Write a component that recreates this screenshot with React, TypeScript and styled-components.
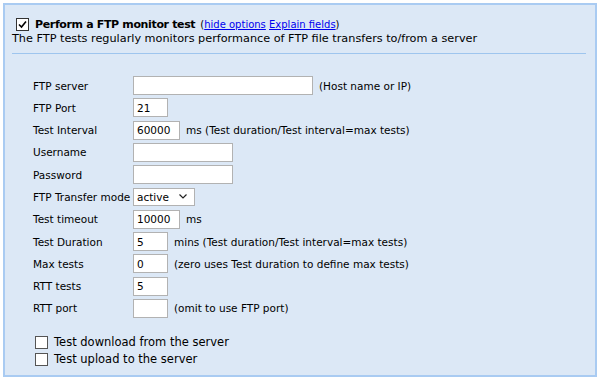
import React from "react";
import styled, { createGlobalStyle } from "styled-components";

const Global = createGlobalStyle`
  html, body {
    margin: 0;
    padding: 0;
    background: #ffffff;
  }
  body {
    font-family: "DejaVu Sans", Verdana, sans-serif;
    color: #000;
  }
`;

interface Row {
  label: string;
  value?: string;
  width: number;
  note?: string;
  select?: boolean;
}

const rows: Row[] = [
  { label: "FTP server", value: "", width: 180, note: "(Host name or IP)" },
  { label: "FTP Port", value: "21", width: 35 },
  { label: "Test Interval", value: "60000", width: 47, note: "ms (Test duration/Test interval=max tests)" },
  { label: "Username", value: "", width: 100 },
  { label: "Password", value: "", width: 100 },
  { label: "FTP Transfer mode", value: "active", width: 62, select: true },
  { label: "Test timeout", value: "10000", width: 47, note: "ms" },
  { label: "Test Duration", value: "5", width: 35, note: "mins (Test duration/Test interval=max tests)" },
  { label: "Max tests", value: "0", width: 35, note: "(zero uses Test duration to define max tests)" },
  { label: "RTT tests", value: "5", width: 35 },
  { label: "RTT port", value: "", width: 35, note: "(omit to use FTP port)" },
];

const CheckMark = () => (
  <svg width="9" height="9" viewBox="0 0 9 9">
    <path d="M1 4.5 L3.5 7 L8 1.5" fill="none" stroke="#000" strokeWidth="1.6" />
  </svg>
);

const Chevron = () => (
  <svg width="8" height="5" viewBox="0 0 8 5">
    <path d="M0.5 0.5 L4 4 L7.5 0.5" fill="none" stroke="#222" strokeWidth="1.2" />
  </svg>
);

export default function App() {
  return (
    <>
      <Global />
      <Panel>
        <Header>
          <TitleLine>
            <Box>
              <CheckMark />
            </Box>
            <Title>Perform a FTP monitor test</Title>
            <Links>
              (<a href="#">hide options</a> <a href="#">Explain fields</a>)
            </Links>
          </TitleLine>
          <Description>
            The FTP tests regularly monitors performance of FTP file transfers to/from a server
          </Description>
        </Header>
        <Divider />
        <Form>
          {rows.map((r) => (
            <React.Fragment key={r.label}>
              <Label>{r.label}</Label>
              <Field>
                {r.select ? (
                  <Select $width={r.width}>
                    <span>{r.value}</span>
                    <Chevron />
                  </Select>
                ) : (
                  <Input $width={r.width}>{r.value}</Input>
                )}
                {r.note && <Note>{r.note}</Note>}
              </Field>
            </React.Fragment>
          ))}
        </Form>
        <Options>
          <Option>
            <Box />
            Test download from the server
          </Option>
          <Option>
            <Box />
            Test upload to the server
          </Option>
        </Options>
      </Panel>
    </>
  );
}

const Panel = styled.div`
  margin: 3px;
  width: 594px;
  height: 374px;
  box-sizing: border-box;
  border: 2px solid #a9cbf2;
  background: #dce8f6;
  padding: 11px 9px 0 7px;
`;

const Header = styled.div``;

const TitleLine = styled.div`
  display: flex;
  align-items: center;
  height: 16px;
`;

const Box = styled.span`
  display: inline-flex;
  align-items: center;
  justify-content: center;
  width: 11px;
  height: 11px;
  border: 1px solid #333;
  background: #fff;
  box-sizing: content-box;
  margin: 0 6px 0 4px;
  flex: none;
`;

const Title = styled.span`
  font-weight: bold;
  font-size: 11px;
  letter-spacing: -0.35px;
`;

const Links = styled.span`
  font-size: 10px;
  margin-left: 5px;
  a {
    color: #0000ee;
    text-decoration: underline;
  }
`;

const Description = styled.div`
  font-size: 11.25px;
  line-height: 14px;
`;

const Divider = styled.div`
  height: 1px;
  background: #9ec5ee;
  margin: 7px 0 0 0;
`;

const Form = styled.div`
  display: grid;
  grid-template-columns: 100px auto;
  row-gap: 3.3px;
  margin: 22px 0 0 21px;
  font-size: 10.5px;
`;

const Label = styled.div`
  display: flex;
  align-items: center;
  height: 19px;
`;

const Field = styled.div`
  display: flex;
  align-items: center;
  height: 19px;
`;

const Input = styled.div<{ $width: number }>`
  width: ${(p) => p.$width}px;
  height: 19px;
  box-sizing: border-box;
  border: 1px solid #b2b2b2;
  background: #fff;
  font-size: 10.5px;
  padding: 0 3px;
  display: flex;
  align-items: center;
`;

const Select = styled(Input)`
  justify-content: space-between;
  padding: 0 7px 0 3px;
  height: 18px;
`;

const Note = styled.span`
  margin-left: 6px;
`;

const Options = styled.div`
  margin: 18px 0 0 23px;
  font-size: 11.5px;
  display: flex;
  flex-direction: column;
  gap: 4px;
`;

const Option = styled.div`
  display: flex;
  align-items: center;
  height: 13px;
  ${Box} {
    border-color: #555;
    margin: 0 6px 0 0;
  }
`;
